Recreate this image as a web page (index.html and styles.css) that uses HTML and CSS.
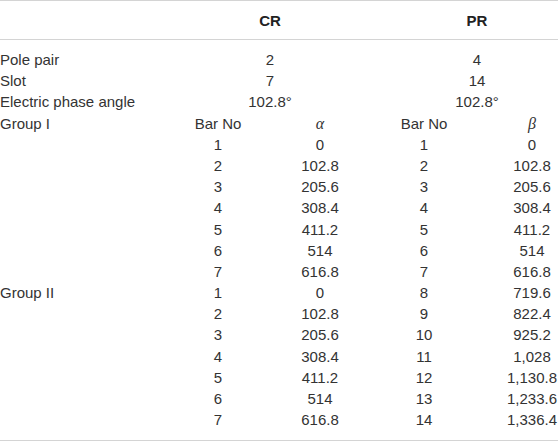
FILE: index.html
```html
<!DOCTYPE html>
<html lang="en">
<head>
<meta charset="utf-8">
<title>CR / PR bar phase angles</title>
<link rel="stylesheet" href="styles.css">
</head>
<body>
<div class="table">
  <div class="head">
    <span></span>
    <span class="h cr">CR</span>
    <span class="h pr">PR</span>
  </div>
  <div class="body">
    <span class="lab">Pole pair</span><span class="span2">2</span><span class="span2 prv">4</span>
    <span class="lab">Slot</span><span class="span2">7</span><span class="span2 prv">14</span>
    <span class="lab">Electric phase angle</span><span class="span2">102.8°</span><span class="span2 prv">102.8°</span>

    <span class="lab">Group I</span><span>Bar No</span><span class="m">α</span><span>Bar No</span><span class="m b">β</span>
    <span class="lab"></span><span>1</span><span>0</span><span>1</span><span class="b">0</span>
    <span class="lab"></span><span>2</span><span>102.8</span><span>2</span><span class="b">102.8</span>
    <span class="lab"></span><span>3</span><span>205.6</span><span>3</span><span class="b">205.6</span>
    <span class="lab"></span><span>4</span><span>308.4</span><span>4</span><span class="b">308.4</span>
    <span class="lab"></span><span>5</span><span>411.2</span><span>5</span><span class="b">411.2</span>
    <span class="lab"></span><span>6</span><span>514</span><span>6</span><span class="b">514</span>
    <span class="lab"></span><span>7</span><span>616.8</span><span>7</span><span class="b">616.8</span>

    <span class="lab">Group II</span><span>1</span><span>0</span><span>8</span><span class="b">719.6</span>
    <span class="lab"></span><span>2</span><span>102.8</span><span>9</span><span class="b">822.4</span>
    <span class="lab"></span><span>3</span><span>205.6</span><span>10</span><span class="b">925.2</span>
    <span class="lab"></span><span>4</span><span>308.4</span><span>11</span><span class="b">1,028</span>
    <span class="lab"></span><span>5</span><span>411.2</span><span>12</span><span class="b">1,130.8</span>
    <span class="lab"></span><span>6</span><span>514</span><span>13</span><span class="b">1,233.6</span>
    <span class="lab"></span><span>7</span><span>616.8</span><span>14</span><span class="b">1,336.4</span>
  </div>
</div>
</body>
</html>
```

FILE: styles.css
```css
html, body {
  margin: 0;
  padding: 0;
  background: #ffffff;
}

.table {
  width: 558px;
  font-family: "Liberation Sans", Arial, sans-serif;
  font-size: 15px;
  color: #333333;
}

.head {
  display: grid;
  grid-template-columns: 168px 204px 186px;
  height: 38px;
  align-items: center;
  border-top: 1px solid #d4d4d4;
  border-bottom: 1px solid #d4d4d4;
}

.h {
  font-weight: bold;
  color: #222222;
  text-align: center;
}

.h.pr {
  padding-left: 24px;
}

.body {
  display: grid;
  grid-template-columns: 168px 100px 104px 104px 82px;
  grid-auto-rows: 21.2px;
  line-height: 21.2px;
  padding: 9px 0 10px;
  border-bottom: 1px solid #d4d4d4;
}

.body span {
  text-align: center;
  white-space: nowrap;
}

.body .lab {
  text-align: left;
}

.body .span2 {
  grid-column: span 2;
}

.body .prv {
  padding-left: 24px;
}

.body .b {
  padding-left: 30px;
}

.body .m {
  font-family: "Liberation Serif", "Times New Roman", serif;
  font-style: italic;
  font-size: 16px;
}
```
